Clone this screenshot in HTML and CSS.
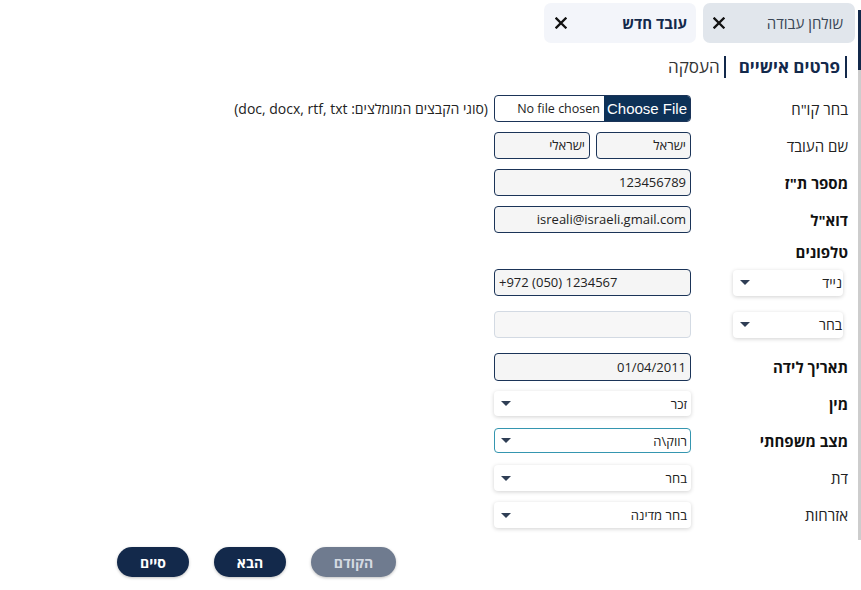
FILE: index.html
```html
<!DOCTYPE html>
<html lang="he">
<head>
<meta charset="utf-8">
<link rel="stylesheet" href="styles.css">
</head>
<body>
<div class="page">
  <div class="main">
    <div class="tabs">
      <div class="tab tab-home"><span>שולחן עבודה</span><svg class="x" viewBox="0 0 12 12" width="12" height="12"><path d="M1.5 1.5 L10.5 10.5 M10.5 1.5 L1.5 10.5"/></svg></div>
      <div class="tab tab-new"><span class="bold">עובד חדש</span><svg class="x" viewBox="0 0 12 12" width="12" height="12"><path d="M1.5 1.5 L10.5 10.5 M10.5 1.5 L1.5 10.5"/></svg></div>
    </div>
    <div class="subtabs">
      <div class="subtab active">פרטים אישיים</div>
      <div class="subtab">העסקה</div>
    </div>
    <div class="form">
      <div class="row">
        <div class="label">בחר קו"ח</div>
        <div class="field">
          <div class="filebox"><span class="filebtn">Choose File</span><span class="filename">No file chosen</span></div>
          <div class="hint">(סוגי הקבצים המומלצים: doc, docx, rtf, txt)</div>
        </div>
      </div>
      <div class="row">
        <div class="label">שם העובד</div>
        <div class="field">
          <div class="input w95">ישראל</div>
          <div class="input w96">ישראלי</div>
        </div>
      </div>
      <div class="row">
        <div class="label bold">מספר ת"ז</div>
        <div class="field"><div class="input w197">123456789</div></div>
      </div>
      <div class="row">
        <div class="label bold">דוא"ל</div>
        <div class="field"><div class="input w197">isreali@israeli.gmail.com</div></div>
      </div>
      <div class="row row-title">
        <div class="label bold">טלפונים</div>
      </div>
      <div class="row row-phone">
        <div class="label"><div class="select small"><span>נייד</span><i class="caret"></i></div></div>
        <div class="field"><div class="input w197 ltr">+972 (050) 1234567</div></div>
      </div>
      <div class="row row-phone">
        <div class="label"><div class="select small"><span>בחר</span><i class="caret"></i></div></div>
        <div class="field"><div class="input w197 empty"></div></div>
      </div>
      <div class="row row-date">
        <div class="label bold">תאריך לידה</div>
        <div class="field"><div class="input w197 tall">01/04/2011</div></div>
      </div>
      <div class="row row-sel">
        <div class="label bold">מין</div>
        <div class="field"><div class="select w197"><span>זכר</span><i class="caret"></i></div></div>
      </div>
      <div class="row row-sel">
        <div class="label bold">מצב משפחתי</div>
        <div class="field"><div class="select w197 focus"><span>רווק\ה</span><i class="caret"></i></div></div>
      </div>
      <div class="row row-sel row-rel">
        <div class="label">דת</div>
        <div class="field"><div class="select w197 h26"><span>בחר</span><i class="caret"></i></div></div>
      </div>
      <div class="row row-sel row-last">
        <div class="label">אזרחות</div>
        <div class="field"><div class="select w197 h26"><span>בחר מדינה</span><i class="caret"></i></div></div>
      </div>
    </div>
    <div class="actions">
      <button class="btn disabled">הקודם</button>
      <button class="btn">הבא</button>
      <button class="btn">סיים</button>
    </div>
  </div>
  <div class="scrollbar"><div class="thumb"></div></div>
</div>
</body>
</html>
```

FILE: styles.css
```css
* { box-sizing: border-box; }
body {
  margin: 0;
  background: #fff;
  font-family: "Open Sans", "DejaVu Sans", sans-serif;
  color: #222;
}
.page {
  display: flex;
  direction: ltr;
  height: 590px;
}
.main {
  flex: 1;
  direction: rtl;
}
.scrollbar {
  width: 3px;
  margin-top: 10px;
  height: 530px;
  background: #cdcdcd;
}
.thumb {
  height: 60px;
  background: #13294b;
}
.tabs {
  display: flex;
  gap: 7px;
  padding: 3px 3px 0 0;
}
.tab {
  width: 152px;
  height: 40px;
  border-radius: 7px;
  display: flex;
  align-items: center;
  justify-content: space-between;
  font-size: 15px;
}
.tab-home {
  background: #e1e6ec;
  color: #3a4656;
  padding: 0 12px 0 10px;
}
.tab-new {
  background: #f3f5fa;
  color: #13294b;
  padding: 0 9px 0 11px;
}
.bold { font-weight: 700; }
.x {
  fill: none;
  stroke: #111;
  stroke-width: 2.3;
  stroke-linecap: square;
}
.subtabs {
  display: flex;
  gap: 13px;
  margin-top: 13px;
  padding-right: 11px;
  height: 22px;
}
.subtab {
  border-right: 2px solid #13294b;
  padding-right: 4px;
  font-size: 17px;
  line-height: 22px;
  color: #333;
}
.subtab.active {
  font-weight: 700;
  color: #13294b;
  padding-right: 5px;
}
.form {
  margin-top: 17px;
  padding-right: 10px;
}
.row {
  display: flex;
  align-items: center;
  margin-bottom: 10px;
}
.label {
  width: 157px;
  flex: none;
  font-size: 15px;
  line-height: 20px;
  color: #222;
}
.label.bold { color: #111; }
.field {
  display: flex;
  align-items: center;
  gap: 6px;
}
.row-title { height: 18px; margin-bottom: 8px; }
.row-phone { margin-bottom: 15px; }
.row-date { margin-bottom: 10px; }
.row-sel { margin-bottom: 12px; }
.row-rel { margin-bottom: 11px; }
.row-last { margin-bottom: 0; }
.input {
  height: 27px;
  border: 1px solid #1b3458;
  border-radius: 4px;
  background: #f5f5f5;
  font-size: 13px;
  line-height: 25px;
  padding: 0 4px;
  color: #222;
  white-space: nowrap;
}
.input.tall { height: 28px; line-height: 26px; }
.input.empty { border-color: #d3dae3; background: #f7f7f7; }
.input.ltr { direction: ltr; text-align: left; }
.w95 { width: 95px; }
.w96 { width: 96px; }
.w197 { width: 197px; }
.filebox {
  width: 197px;
  height: 27px;
  border: 1px solid #1b3458;
  border-radius: 4px;
  display: flex;
  overflow: hidden;
  background: #fff;
}
.filebtn {
  background: #0d3157;
  color: #fff;
  font-family: "Liberation Sans", sans-serif;
  font-size: 15px;
  line-height: 25px;
  padding: 0 3px;
  direction: ltr;
}
.filename {
  font-size: 12.5px;
  line-height: 25px;
  padding-right: 4px;
  color: #222;
  direction: ltr;
}
.hint {
  font-size: 14px;
  color: #222;
  white-space: nowrap;
}
.select {
  height: 25px;
  background: #fff;
  border-radius: 4px;
  box-shadow: 0 1px 4px rgba(0, 0, 0, 0.18);
  display: flex;
  align-items: center;
  justify-content: space-between;
  padding: 0 4px 0 7px;
  font-size: 13px;
  color: #222;
}
.select.h26 { height: 26px; }
.select.small {
  width: 110px;
  height: 26px;
  margin-right: 5px;
  padding-right: 1px;
  font-size: 14px;
}
.select.focus {
  border: 1px solid #3596b0;
  box-shadow: none;
  padding: 0 3px 0 6px;
}
.caret {
  width: 0;
  height: 0;
  border-left: 5px solid transparent;
  border-right: 5px solid transparent;
  border-top: 5px solid #2f3e55;
}
.actions {
  display: flex;
  gap: 25px;
  margin-top: 19px;
  padding-right: 462px;
}
.btn {
  height: 30px;
  width: 72px;
  border: none;
  border-radius: 15px;
  background: #13294b;
  color: #fff;
  font-family: inherit;
  font-weight: 700;
  font-size: 14px;
  box-shadow: 0 1px 3px rgba(0, 0, 0, 0.25);
}
.btn.disabled {
  width: 85px;
  background: #6f7b8f;
  color: #d5dae2;
}
```
